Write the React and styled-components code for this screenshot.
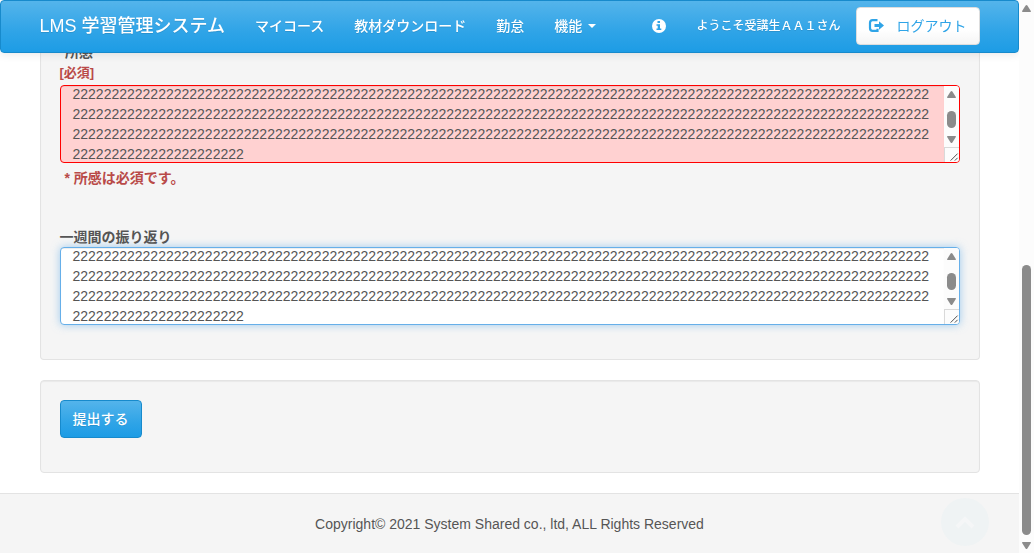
import React, { useLayoutEffect, useRef } from "react";
import styled, { createGlobalStyle, css } from "styled-components";

const GlobalStyle = createGlobalStyle`
  *, *::before, *::after { box-sizing: border-box; }
  body {
    margin: 0;
    background: #fff;
    color: #555;
    font-family: "Liberation Sans", "Noto Sans CJK JP", sans-serif;
    font-size: 14px;
    line-height: 20px;
  }
  button, input, textarea { font-family: inherit; font-size: inherit; line-height: inherit; }
`;

const Page = styled.div`
  padding-right: 15px;
  min-height: 100vh;
  display: flex;
  flex-direction: column;
`;

const Container = styled.div`
  width: 100%;
  max-width: 970px;
  margin: 0 auto;
  padding: 0 15px;
`;

const Navbar = styled.header`
  position: fixed;
  z-index: 10;
  top: 0;
  left: 0;
  right: 15px;
  border: 1px solid #178acc;
  border-radius: 4px;
  background: linear-gradient(#54b4eb, #2fa4e7 60%, #1d9ce5);
  box-shadow: 0 1px 10px rgba(0, 0, 0, 0.1);
  color: #fff;
  text-shadow: 0 1px 0 rgba(0, 0, 0, 0.1);
`;

const NavInner = styled(Container)`
  display: flex;
  align-items: center;
  height: 51px;
  padding-bottom: 1px;
`;

const Brand = styled.a`
  padding-right: 15px;
  font-size: 18px;
  font-weight: 500;
  color: inherit;
  text-decoration: none;
  white-space: nowrap;
`;

const NavMenu = styled.nav`
  display: flex;
`;

const NavLink = styled.a`
  display: flex;
  align-items: center;
  gap: 6px;
  padding: 15px;
  font-weight: 500;
  color: inherit;
  text-decoration: none;
  white-space: nowrap;
`;

const Caret = styled.span`
  border: 4px solid transparent;
  border-top-color: currentColor;
  border-bottom: 0;
`;

const NavRight = styled.div`
  display: flex;
  align-items: center;
  margin-left: auto;
  white-space: nowrap;
`;

const Welcome = styled.span`
  padding: 0 15px;
  font-size: 12px;
  font-weight: 500;
`;

const Button = styled.button`
  display: inline-flex;
  align-items: center;
  gap: 14px;
  height: 38px;
  padding: 0 12px;
  border: 1px solid #178acc;
  border-radius: 4px;
  color: #fff;
  font-weight: 500;
  background: linear-gradient(#54b4eb, #2fa4e7 60%, #1d9ce5);
  text-shadow: 0 1px 0 rgba(0, 0, 0, 0.1);
  white-space: nowrap;
  ${(p) =>
    p.$light &&
    css`
      border-color: #ddd;
      color: #2fa4e7;
      font-weight: 400;
      text-shadow: none;
      background: linear-gradient(#fff, #fff 60%, #f5f5f5);
    `}
`;

const Main = styled.main`
  flex: 1;
`;

const Panel = styled.section`
  padding: 19px 19px 34px;
  margin-bottom: 20px;
  border: 1px solid #e3e3e3;
  border-radius: 4px;
  background: #f5f5f5;
  box-shadow: inset 0 1px 1px rgba(0, 0, 0, 0.05);
`;

const FormPanel = styled(Panel)`
  padding-top: 42px;
  border-top: 0;
`;

const Field = styled.div`
  & + & {
    margin-top: 39px;
  }
`;

const Label = styled.label`
  display: block;
  font-weight: 700;
`;

const Required = styled.span`
  display: block;
  padding: 1px 0 2px;
  font-size: 13px;
  color: #b94a48;
`;

const ErrorText = styled.p`
  margin: 5px 0 0;
  padding-left: 5px;
  font-weight: 700;
  color: #b94a48;
`;

const TextFrame = styled.div`
  display: flex;
  height: 78px;
  border: 1px solid ${(p) => (p.$error ? "#f00" : "#66afe9")};
  border-radius: 4px;
  overflow: hidden;
  background: ${(p) => (p.$error ? "#ffd1d1" : "#fff")};
  box-shadow: ${(p) => (p.$error ? "none" : "0 0 8px rgba(102, 175, 233, 0.6)")};
`;

const TextBox = styled.textarea`
  flex: 1;
  min-width: 0;
  padding: 8px 12px;
  border: 0;
  outline: 0;
  resize: none;
  color: #555;
  background: transparent;
  box-shadow: inset 0 1px 1px rgba(0, 0, 0, 0.075);
  word-break: break-all;
  scrollbar-width: none;
`;

const BoxScroll = styled.div`
  display: flex;
  flex-direction: column;
  width: 15px;
  background: #fcfcfc;
`;

const BoxTrack = styled.div`
  flex: 1;
  display: flex;
  flex-direction: column;
  align-items: center;
  justify-content: space-between;
  padding: 5px 0 4px;
`;

const BoxThumb = styled.div`
  width: 9px;
  height: 17px;
  margin-top: 5px;
  border-radius: 5px;
  background: #8b8b8b;
`;

const Corner = styled.svg`
  display: block;
  border-top: 1px solid #d9d9d9;
  border-left: 1px solid #d9d9d9;
`;

const PageScroll = styled.div`
  position: fixed;
  z-index: 20;
  top: 0;
  right: 0;
  bottom: 0;
  width: 15px;
  padding: 5px 0 4px;
  display: flex;
  flex-direction: column;
  align-items: center;
  background: #fcfcfc;
`;

const PageTrack = styled.div`
  flex: 1;
  width: 9px;
  display: flex;
  flex-direction: column;
  padding: 3px 0 7px;
`;

const PageThumb = styled.div`
  height: 52%;
  margin-top: auto;
  border-radius: 5px;
  background: #8b8b8b;
`;

const Footer = styled.footer`
  padding: 20px 0 19px;
  border-top: 1px solid #e3e3e3;
  text-align: center;
  background: #f5f5f5;
`;

const ToTop = styled.button`
  position: fixed;
  right: 45px;
  bottom: 7px;
  display: flex;
  align-items: center;
  justify-content: center;
  width: 48px;
  height: 48px;
  padding: 0;
  border: 0;
  border-radius: 50%;
  background: #eff3f4;
`;

const Arrow = ({ down }) => (
  <svg width="9" height="7" viewBox="0 0 9 7" aria-hidden="true">
    <path
      d={down ? "M0 .7Q0 0 .8 0H8.2Q9 0 9 .8L5.4 6.4Q4.5 7.4 3.6 6.4Z" : "M0 6.3Q0 7 .8 7H8.2Q9 7 9 6.2L5.4.6Q4.5-.4 3.6.6Z"}
      fill="#8b8b8b"
    />
  </svg>
);

const InfoIcon = () => (
  <svg width="14" height="14" viewBox="0 0 14 14" aria-hidden="true">
    <circle cx="7" cy="7" r="7" fill="#fff" />
    <path d="M5.5 2H8v2H5.5zM4.5 5.2H8v4.3h1.3V11H4.5V9.5h1.2V6.7H4.5z" fill="#2fa4e7" />
  </svg>
);

const LogoutIcon = () => (
  <svg width="14" height="14" viewBox="0 0 14 14" overflow="visible" aria-hidden="true">
    <path d="M8.5 1.2H3.5Q1 1.2 1 3.8V9Q1 11.800 3.500 11.800H8.500V9.800" fill="none" stroke="#2fa4e7" strokeWidth="2.200" />
    <path d="M5.500 5H10V2.300L15 6.500l-5 4.200V8H5.500z" fill="#2fa4e7" />
  </svg>
);

const REPORT = "2".repeat(462);

function ReportBox({ id, error }) {
  const ref = useRef(null);
  useLayoutEffect(() => {
    ref.current.scrollTop = 30;
  }, []);
  return (
    <TextFrame $error={error}>
      <TextBox id={id} ref={ref} defaultValue={REPORT} spellCheck={false} />
      <BoxScroll>
        <BoxTrack>
          <Arrow />
          <BoxThumb />
          <Arrow down />
        </BoxTrack>
        <Corner width="15" height="15" viewBox="0 0 15 15" aria-hidden="true">
          <path d="M6 13.500L13.500 6M10.500 13.500l3-3" stroke="#444" fill="none" />
        </Corner>
      </BoxScroll>
    </TextFrame>
  );
}

export default function App() {
  return (
    <>
      <GlobalStyle />
      <Page>
        <Navbar>
          <NavInner>
            <Brand href="#">LMS 学習管理システム</Brand>
            <NavMenu>
              <NavLink href="#">マイコース</NavLink>
              <NavLink href="#">教材ダウンロード</NavLink>
              <NavLink href="#">勤怠</NavLink>
              <NavLink href="#">
                機能
                <Caret />
              </NavLink>
            </NavMenu>
            <NavRight>
              <NavLink href="#" aria-label="情報">
                <InfoIcon />
              </NavLink>
              <Welcome>ようこそ受講生ＡＡ１さん</Welcome>
              <Button $light type="button">
                <LogoutIcon />
                ログアウト
              </Button>
            </NavRight>
          </NavInner>
        </Navbar>

        <Main>
          <Container>
            <FormPanel>
              <Field>
                <Label htmlFor="impression">
                  *所感
                  <Required>[必須]</Required>
                </Label>
                <ReportBox id="impression" error />
                <ErrorText>* 所感は必須です。</ErrorText>
              </Field>
              <Field>
                <Label htmlFor="weekly">一週間の振り返り</Label>
                <ReportBox id="weekly" />
              </Field>
            </FormPanel>
            <Panel>
              <Button type="submit">提出する</Button>
            </Panel>
          </Container>
        </Main>

        <Footer>Copyright© 2021 System Shared co., ltd, ALL Rights Reserved</Footer>
      </Page>

      <ToTop type="button" aria-label="ページの先頭へ">
        <svg width="20" height="14" viewBox="0 0 20 14" aria-hidden="true">
          <path d="M2 12l8-8 8 8" fill="none" stroke="#f5f6f7" strokeWidth="4" />
        </svg>
      </ToTop>

      <PageScroll>
        <Arrow />
        <PageTrack>
          <PageThumb />
        </PageTrack>
        <Arrow down />
      </PageScroll>
    </>
  );
}
